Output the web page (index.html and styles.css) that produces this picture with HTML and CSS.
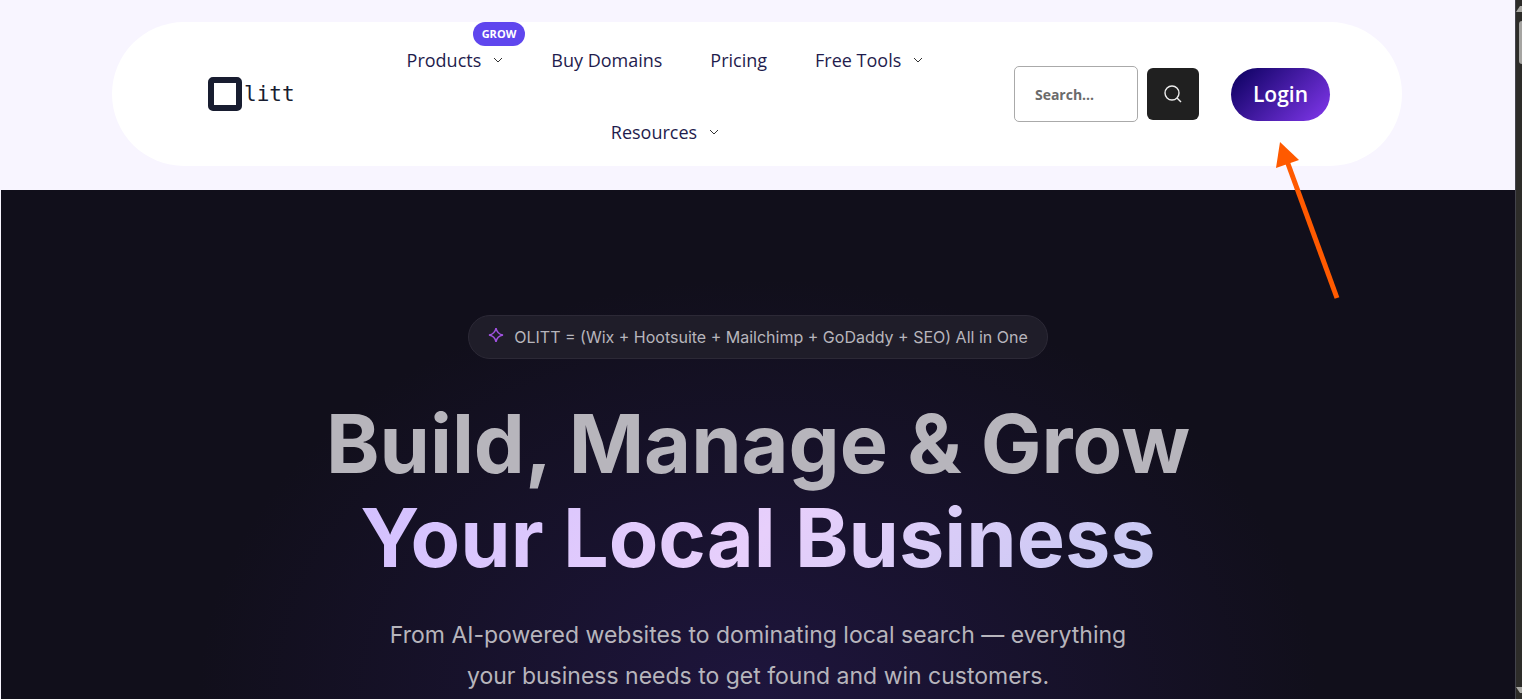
FILE: index.html
```html
<!DOCTYPE html>
<html lang="en">
<head>
    <meta charset="UTF-8">
    <title>Olitt</title>
    <link rel="stylesheet" href="styles.css">
    <meta name="viewport" content="width=device-width, initial-scale=1" />
</head>
<body>
<div class="page">
    <header class="header">
        <div class="navbar">
            <a class="logo" href="#">
                <svg width="34" height="34" viewBox="0 0 34 34"><rect x="3" y="3" width="28" height="28" rx="2" fill="none" stroke="#181d30" stroke-width="6"/></svg>
                <span>litt</span>
            </a>
            <nav class="menu">
                <a href="#">Products
                    <svg class="caret" viewBox="0 0 10 10"><path d="M1 3l4 4 4-4"/></svg>
                    <span class="tag">GROW</span>
                </a>
                <a href="#">Buy Domains</a>
                <a href="#">Pricing</a>
                <a href="#">Free Tools
                    <svg class="caret" viewBox="0 0 10 10"><path d="M1 3l4 4 4-4"/></svg>
                </a>
                <a href="#">Resources
                    <svg class="caret" viewBox="0 0 10 10"><path d="M1 3l4 4 4-4"/></svg>
                </a>
            </nav>
            <form class="search">
                <input type="text" placeholder="Search..." aria-label="Search">
                <button type="button" aria-label="Submit search">
                    <svg width="20" height="20" viewBox="0 0 20 20"><circle cx="9" cy="9" r="7"/><path d="M14 14l4 4"/></svg>
                </button>
            </form>
            <div class="account">
                <a class="login" href="#">Login</a>
                <svg class="pointer" width="64" height="160" viewBox="0 0 64 160"><path d="M4 0l19 18-23 8z" fill="#ff5a00"/><path d="M11 19l50 137" stroke="#ff5a00" stroke-width="5"/></svg>
            </div>
        </div>
    </header>
    <main class="hero">
        <div class="badge">
            <svg width="16" height="16" viewBox="0 0 16 16"><path d="M8 1q1 6 7 7q-6 1-7 7q-1-6-7-7q6-1 7-7z"/></svg>
            <span>OLITT = (Wix + Hootsuite + Mailchimp + GoDaddy + SEO) All in One</span>
        </div>
        <h1>Build, Manage &amp; Grow<br><span>Your Local Business</span></h1>
        <p>From AI-powered websites to dominating local search — everything<br>your business needs to get found and win customers.</p>
    </main>
</div>
<div class="scrollbar">
    <svg width="6" height="8" viewBox="0 0 6 8"><path d="M0 8l4-6 2 0v6z"/></svg>
    <div class="thumb"></div>
    <svg class="down" width="6" height="8" viewBox="0 0 6 8"><path d="M0 0h6v6h-2z"/></svg>
</div>
</body>
</html>
```

FILE: styles.css
```css
*{
    box-sizing: border-box;
    margin: 0px;
    padding: 0px;
}
body{
    display: flex;
    height: 100vh;
    overflow: hidden;
    background: #f8f5ff;
    font-family: "Open Sans", "Noto Sans", sans-serif;
}
a{
    color: inherit;
    text-decoration: none;
}
.page{
    display: flex;
    flex-direction: column;
    flex: 1;
}
.header{
    padding: 22px 113px 24px 112px;
}
.navbar{
    display: flex;
    align-items: center;
    padding: 0 72px 0 96px;
    border-radius: 72px;
    background: #fff;
}
.logo{
    display: flex;
    align-items: center;
    gap: 2px;
    width: 108px;
    flex: none;
    color: #181d30;
    font: 21px "DejaVu Sans Mono", monospace;
}
.menu{
    display: flex;
    flex-wrap: wrap;
    justify-content: center;
    flex: 1;
    color: #1f1c4d;
    font-size: 18px;
    line-height: 72px;
}
.menu a{
    position: relative;
    display: flex;
    align-items: center;
    gap: 12px;
    padding: 3px 24px 0;
    height: 72px;
}
.caret{
    width: 10px;
    height: 10px;
    fill: none;
    stroke: #333;
}
.tag{
    position: absolute;
    top: 0;
    right: 2px;
    padding: 0 9px;
    border-radius: 12px;
    background: #5f46ee;
    color: #fff;
    font-size: 11px;
    font-weight: 700;
    line-height: 24px;
}
.search{
    display: flex;
    align-items: center;
    gap: 9px;
}
.search input{
    width: 124px;
    height: 56px;
    padding: 0 20px;
    border: 1px solid #aaa;
    border-radius: 5px;
    font: 700 14px "Open Sans", sans-serif;
}
.search input::placeholder{
    color: #6b6b6b;
}
.search button{
    display: flex;
    align-items: center;
    justify-content: center;
    width: 52px;
    height: 52px;
    border: 0;
    border-radius: 6px;
    background: #202020;
}
.search svg{
    fill: none;
    stroke: #eee;
    stroke-width: 1.4;
}
.account{
    position: relative;
    margin-left: 32px;
}
.login{
    display: block;
    padding: 0 22px;
    border-radius: 27px;
    background: linear-gradient(135deg, #15056b 10%, #7632df 90%);
    color: #fff;
    font-size: 21px;
    font-weight: 600;
    line-height: 53px;
}
.pointer{
    position: absolute;
    top: 74px;
    left: 45px;
    z-index: 2;
}
.hero{
    display: flex;
    flex-direction: column;
    align-items: center;
    flex: 1;
    padding-top: 125px;
    border-left: 1px solid #f8f5ff;
    background: radial-gradient(ellipse 560px 420px at 50% 100%, #1e153d, #110f1b);
    color: #b7b5bc;
    font-family: "Inter", sans-serif;
    text-align: center;
}
.badge{
    display: flex;
    align-items: baseline;
    gap: 10px;
    padding: 0 19px;
    border: 1px solid #2c2936;
    border-radius: 22px;
    background: #1f1d29;
    font-size: 16px;
    line-height: 42px;
}
.badge svg{
    fill: none;
    stroke: #a052e0;
    stroke-width: 1.5;
}
h1{
    margin-top: 38px;
    font-size: 81px;
    font-weight: 700;
    line-height: 94px;
}
h1 span{
    background: linear-gradient(135deg, #d2c0ff, #e7cffb 50%, #c5c8f2);
    -webkit-background-clip: text;
    background-clip: text;
    color: transparent;
}
.hero p{
    margin-top: 30px;
    font-size: 23px;
    line-height: 41px;
}
.scrollbar{
    display: flex;
    flex-direction: column;
    align-items: flex-end;
    width: 7px;
    border-left: 1px solid #43434b;
    background: #2d2c29;
}
.scrollbar svg{
    margin-top: 4px;
    fill: #aaa9a5;
}
.thumb{
    width: 3px;
    height: 43px;
    margin-top: 9px;
    border-radius: 3px 0 0 3px;
    background: #a5a4a1;
}
.scrollbar .down{
    margin-top: auto;
    margin-bottom: 4px;
}
```
